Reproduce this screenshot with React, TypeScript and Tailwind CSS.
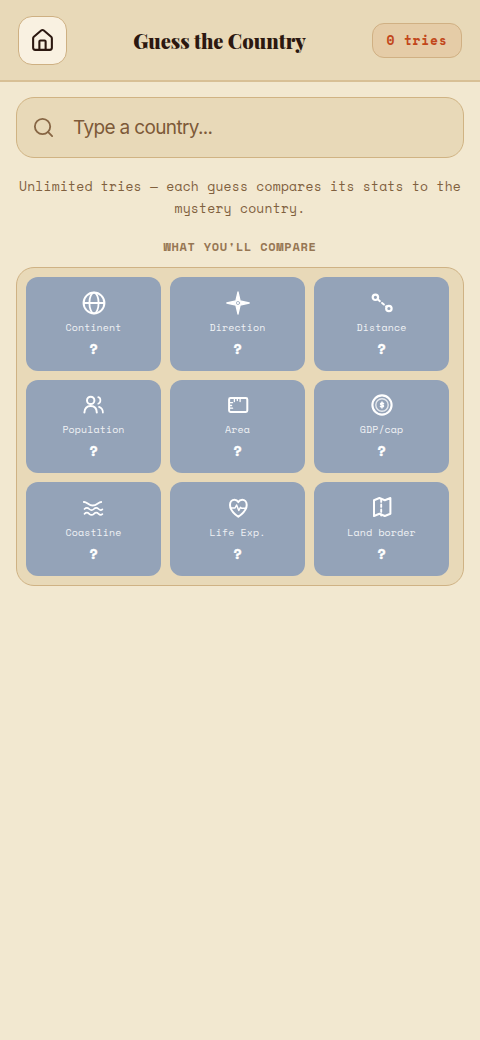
import type { ReactNode } from "react";
import { House, Search } from "lucide-react";

const mono = "font-['Space_Mono','Liberation_Mono',monospace]";

function StatIcon({ children }: { children: ReactNode }) {
  return (
    <svg
      className="size-6 shrink-0"
      viewBox="0 0 24 24"
      fill="none"
      stroke="currentColor"
      strokeWidth="2"
      strokeLinecap="round"
      strokeLinejoin="round"
    >
      {children}
    </svg>
  );
}

const stats = [
  {
    label: "Continent",
    icon: (
      <>
        <circle cx="12" cy="12" r="10.4" />
        <ellipse cx="12" cy="12" rx="4.6" ry="10.4" strokeWidth="1.8" />
        <path d="M1.8 12h20.4" strokeWidth="1.8" />
      </>
    ),
  },
  {
    label: "Direction",
    icon: (
      <>
        <path
          d="M12 .8l2.1 9.1 9.1 2.100-9.100 2.100L12 23.200l-2.100-9.100L.8 12l9.100-2.100z"
          fill="currentColor"
          strokeWidth="1.3"
        />
        <circle cx="12" cy="12" r="1.6" stroke="#94a3b8" strokeWidth=".7" />
      </>
    ),
  },
  {
    label: "Distance",
    icon: (
      <>
        <circle cx="5.4" cy="6.3" r="2.7" strokeWidth="2.2" />
        <circle cx="18.9" cy="17.5" r="2.7" strokeWidth="2.2" />
        <path d="M8 8.6l8.4 7" strokeDasharray="2.4 2.9" />
      </>
    ),
  },
  {
    label: "Population",
    icon: (
      <>
        <circle cx="8.7" cy="7.4" r="3.7" />
        <path d="M2.4 19.6c0-4.3 2.6-6.6 6.2-6.6s6.2 2.3 6.2 6.6" />
        <path d="M16.2 4.1c1.4.3 2.2 1.6 2.2 3.2s-.8 2.9-2.2 3.4" strokeWidth="1.7" />
        <path d="M17 13.9c2.4.9 3.9 2.9 3.9 5.7" strokeWidth="1.7" />
      </>
    ),
  },
  {
    label: "Area",
    icon: (
      <>
        <rect x="3.1" y="5" width="18.2" height="14" rx="1.4" />
        <path d="M8.4 5.5v3M11.3 5.5v2M14.1 5.5v3M3.6 9.7h3M3.6 12.5h2M3.6 15.2h3" strokeWidth="1.3" />
      </>
    ),
  },
  {
    label: "GDP/cap",
    icon: (
      <>
        <circle cx="12" cy="12" r="9.6" strokeWidth="2.1" />
        <circle cx="12" cy="12" r="6.2" strokeWidth="1.4" opacity=".75" />
        <path
          d="M13.6 10.8c-.2-.5-.8-.8-1.6-.8-.9 0-1.500.400-1.500 1 0 1.400 3.100.700 3.100 2.100 0 .600-.600 1-1.600 1-.800 0-1.400-.300-1.600-.800M12 9v6"
          strokeWidth="1.4"
        />
      </>
    ),
  },
  {
    label: "Coastline",
    icon: (
      <>
        <path d="M1.9 6c2.8-.4 4.8 3.5 8.800 3.500S16.600 6 19.200 6" strokeWidth="1.9" />
        <path
          d="M2.5 13c1.6-1.6 3.1-1.6 4.7 0s3.1 1.6 4.7 0 3.1-1.6 4.7 0 2.6 1.3 3.8.3"
          strokeWidth="1.7"
        />
        <path
          d="M2.5 17.8c1.6-1.6 3.1-1.6 4.7 0s3.1 1.6 4.7 0 3.1-1.6 4.7 0 2.6 1.3 3.8.3"
          strokeWidth="1.7"
        />
      </>
    ),
  },
  {
    label: "Life Exp.",
    icon: (
      <>
        <path d="M12.3 20.8C8 17.8 4 13.9 4 9c0-3 2-5.2 4.5-5.2 1.7 0 3 .9 3.8 2.3.8-1.4 2.2-2.3 3.9-2.3 2.5 0 4.5 2.2 4.5 5.2 0 4.9-4.1 8.8-8.4 11.8z" />
        <path d="M5 12h4l1.6-3 2.2 5.5 1.7-3.2 1 .9H19" strokeWidth="1.5" />
      </>
    ),
  },
  {
    label: "Land border",
    icon: (
      <>
        <path d="M4 4.2L9.4 2l5.4 2.2L20.4 2v15.8L14.8 20l-5.4-2.2L4 20z" />
        <path d="M11.2 3.5v16" strokeDasharray="2.4 2.6" strokeWidth="1.9" />
      </>
    ),
  },
];

function StatTile({ label, icon }: { label: string; icon: ReactNode }) {
  return (
    <div className="flex h-[93.6px] flex-col items-center rounded-xl bg-[#94a3b8] pt-[13.5px] text-white">
      <StatIcon>{icon}</StatIcon>
      <span className="mt-[5px] text-[10px] leading-[15px] tracking-[0.1px] opacity-85">{label}</span>
      <span className="mt-1 text-[14px] leading-5 font-bold [-webkit-text-stroke:0.4px_white]">?</span>
    </div>
  );
}

export default function App() {
  return (
    <div className="min-h-screen w-full bg-[#f2e8d0] text-[#2c1810]">
      <header className="flex h-[82px] items-center justify-between border-b-2 border-[#d8c096] bg-[#e8d9b8] px-[18px]">
        <button className="flex size-[49px] items-center justify-center rounded-[14px] border border-[#ceb082] bg-[#f9f1e1]">
          <House size={25} strokeWidth={2} />
        </button>
        <h1 className="pt-px font-['Playfair_Display','Liberation_Serif',serif] text-[20px] leading-7 font-black whitespace-nowrap">
          Guess the Country
        </h1>
        <div
          className={`${mono} flex h-[35px] w-[90px] items-center justify-center rounded-xl border border-[#d0b083] bg-[#e5cca7] pt-0.5 text-[13px] font-bold tracking-[0.78px] text-[#c2471b]`}
        >
          0 tries
        </div>
      </header>

      <main className="px-4 pt-[15px]">
        <div className="flex h-[61px] items-center gap-[18px] rounded-[18px] border border-[#d0b383] bg-[#e8d9b8] pl-[15px] text-[#7d5a38]">
          <Search size={23} strokeWidth={1.9} className="opacity-90" />
          <input
            className="min-w-0 flex-1 bg-transparent pt-0.5 font-['Inter',sans-serif] text-[19px] tracking-[-0.65px] outline-none placeholder:text-[#7d5a38] placeholder:opacity-100"
            placeholder="Type a country..."
          />
        </div>

        <p className={`${mono} mt-[17px] text-center text-[13px] leading-[22px] tracking-[0.23px] text-[#80603e]`}>
          Unlimited tries — each guess compares its stats to the mystery country.
        </p>

        <h2 className={`${mono} mt-[19px] text-center text-[12px] leading-[18px] font-bold tracking-[0.72px] text-[#967653]`}>
          WHAT YOU&apos;LL COMPARE
        </h2>

        <section
          className={`${mono} mt-[11px] grid grid-cols-3 gap-[9px] rounded-[18px] border border-[#cfb284] bg-[#e8d9b8] py-[9px] pr-[14px] pl-[9px]`}
        >
          {stats.map((stat) => (
            <StatTile key={stat.label} label={stat.label} icon={stat.icon} />
          ))}
        </section>
      </main>
    </div>
  );
}
